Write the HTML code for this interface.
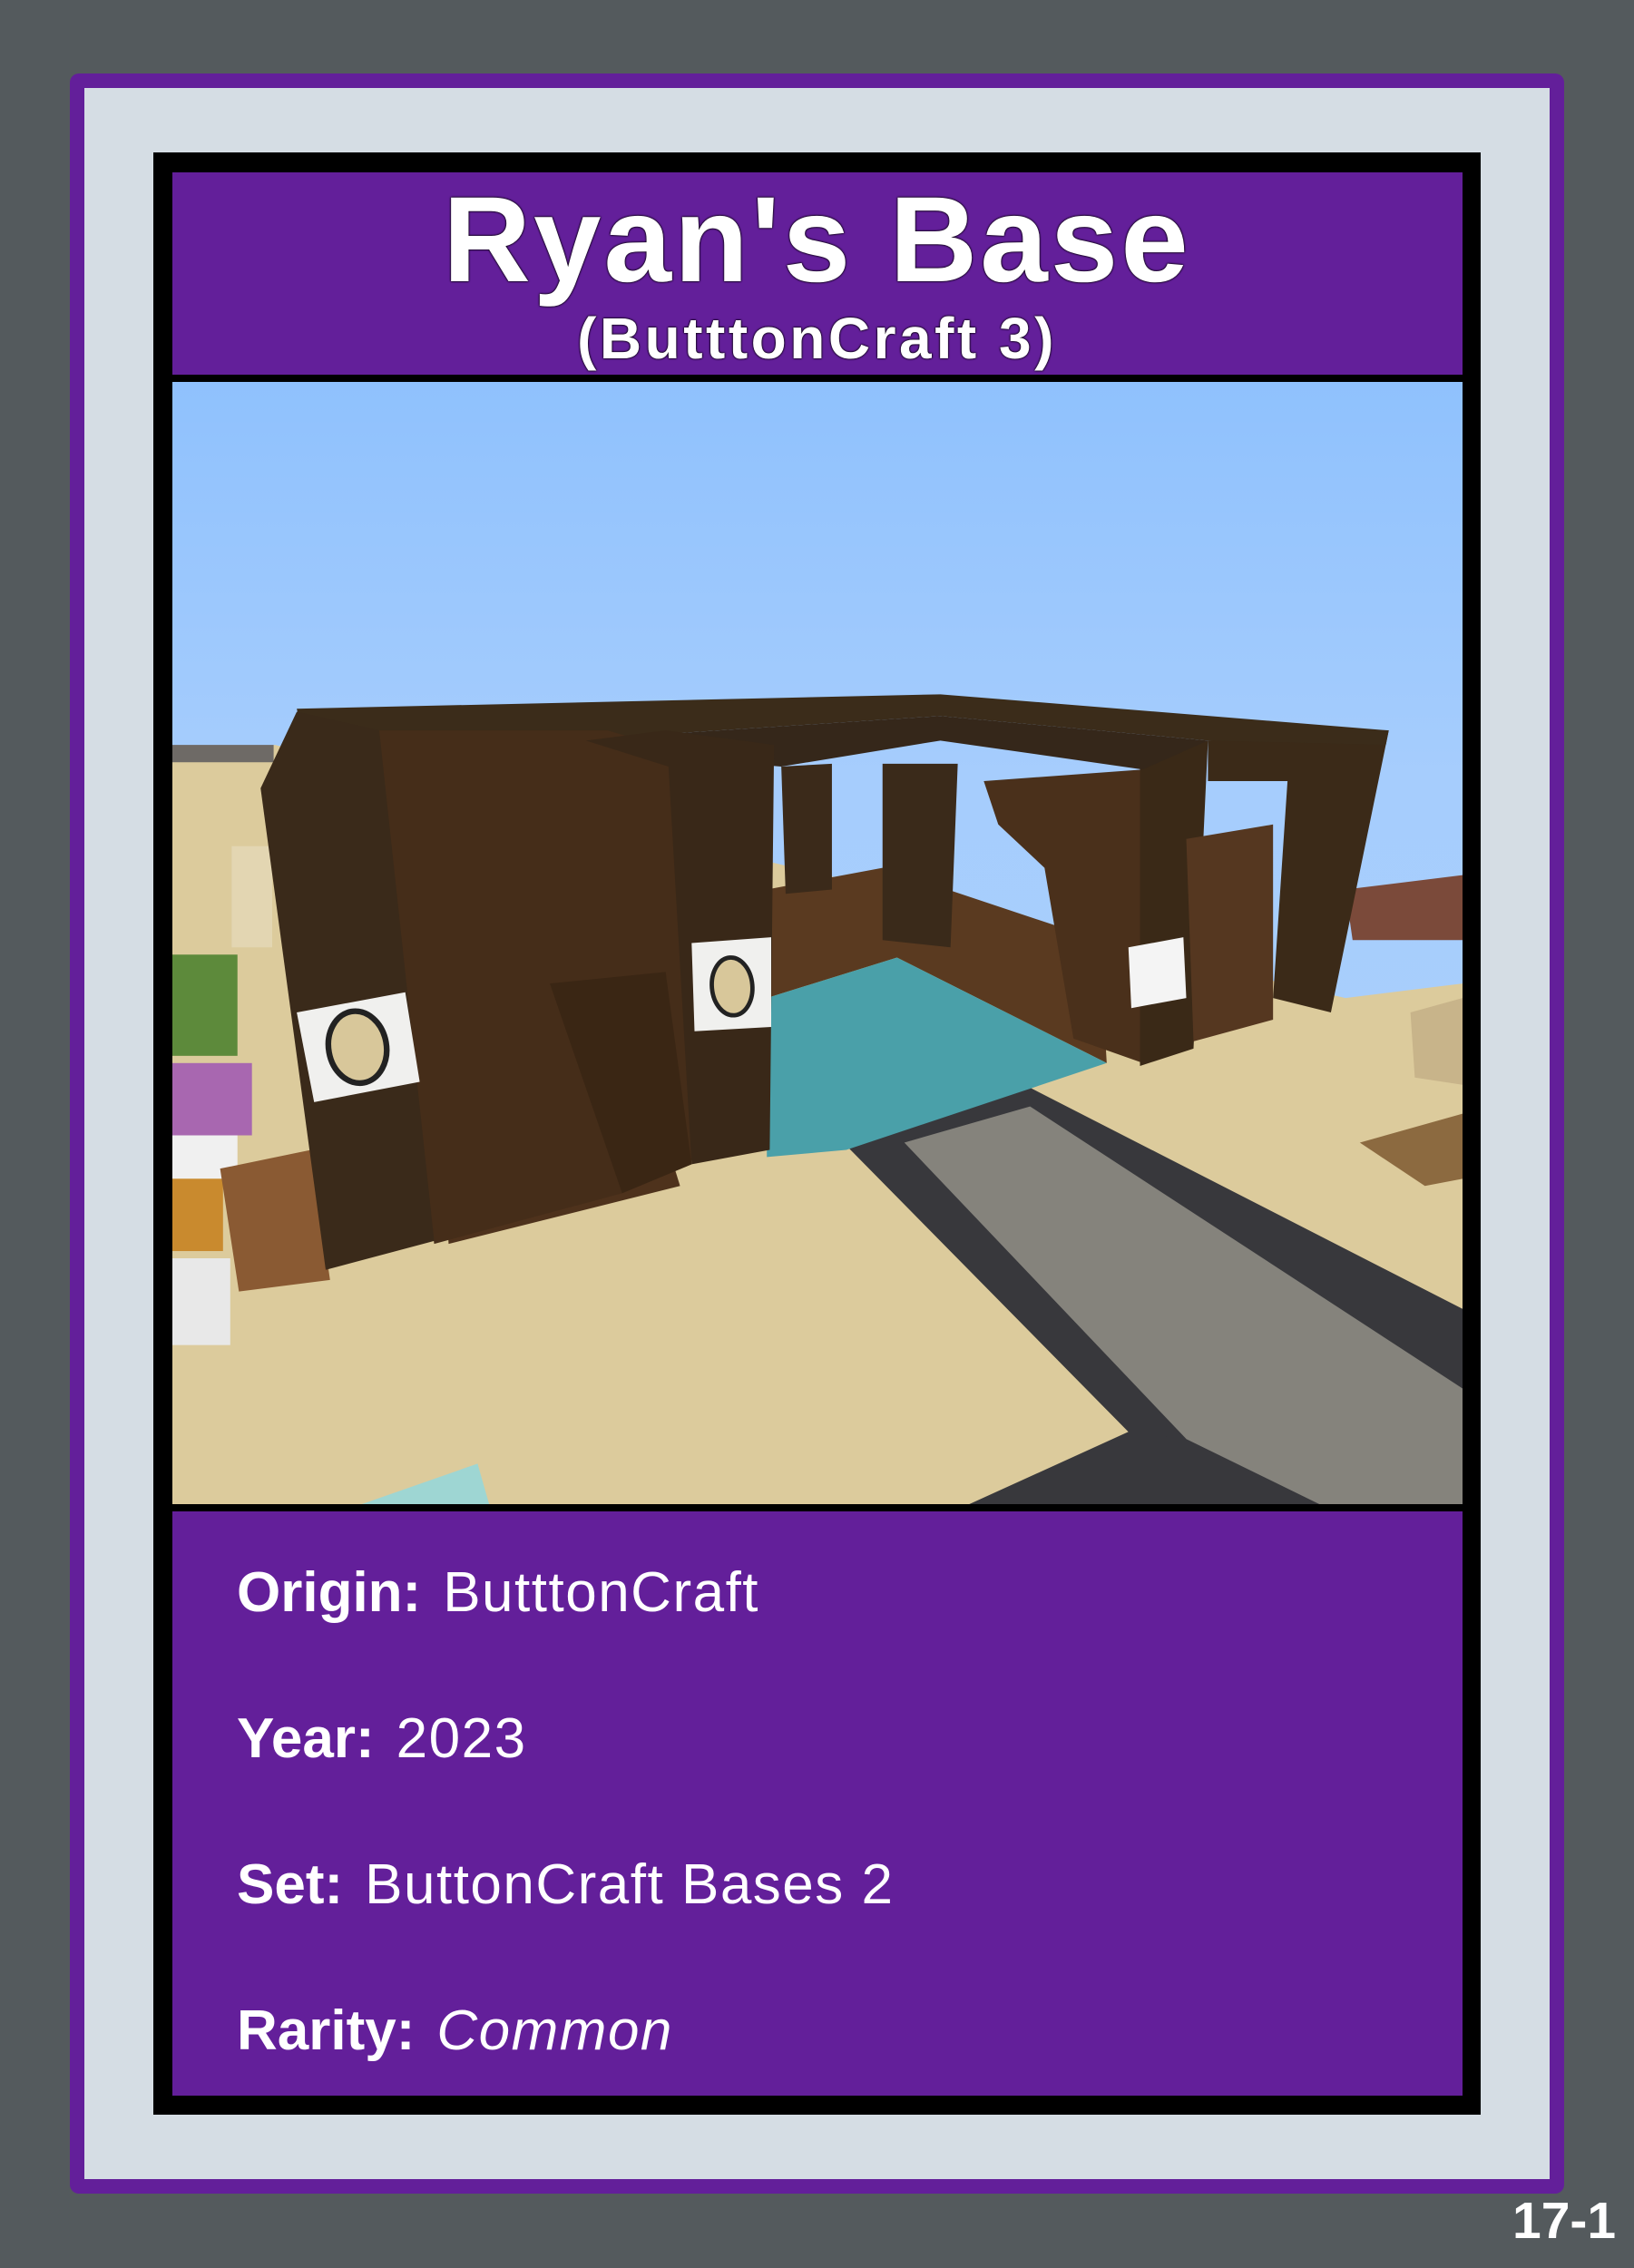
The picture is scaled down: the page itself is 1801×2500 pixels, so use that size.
<!DOCTYPE html>
<html><head><meta charset="utf-8"><style>
html,body{margin:0;padding:0}
body{width:1801px;height:2500px;background:#545a5d;position:relative;overflow:hidden;font-family:"Liberation Sans",sans-serif}
.frame{position:absolute;left:77px;top:81px;width:1615px;height:2305px;border:16px solid #631f9a;background:#d5dde4;border-radius:10px}
.black{position:absolute;left:169px;top:168px;width:1463px;height:2163px;background:#000}
.hdr{position:absolute;left:190px;top:190px;width:1422px;height:223px;background:#631f9a}
.img{position:absolute;left:190px;top:421px;width:1422px;height:1237px}
.body{position:absolute;left:190px;top:1666px;width:1422px;height:644px;background:#631f9a}
.t{position:absolute;left:0;width:1801px;text-align:center;color:#fff;font-weight:bold;white-space:nowrap;text-shadow:0 0 2px #000,0 0 2px #000}
.row{position:absolute;left:261px;color:#fff;font-size:62px;white-space:nowrap;line-height:1}
.row b{font-weight:bold;margin-right:24px}
.row span{letter-spacing:1.5px}
.num{position:absolute;left:1667px;top:2420px;color:#fff;font-weight:bold;font-size:57px;line-height:1}
</style></head><body>
<div class="frame"></div>
<div class="black"></div>
<div class="hdr"></div>
<div class="t" style="top:195px;font-size:134px;letter-spacing:3px;line-height:1.05">Ryan's Base</div>
<div class="t" style="top:341px;font-size:64px;letter-spacing:3.5px;line-height:1">(ButttonCraft 3)</div>
<svg class="img" viewBox="119 264 892 776" preserveAspectRatio="none">
<defs><linearGradient id="sky" x1="0" y1="0" x2="0" y2="1"><stop offset="0" stop-color="#8fc1fd"/><stop offset="0.35" stop-color="#a6cdfd"/><stop offset="1" stop-color="#abd0fb"/></linearGradient></defs>
<rect x="119" y="264" width="892" height="776" fill="url(#sky)"/>
<!-- sand -->
<polygon points="119,520 190,515 930,690 1011,680 1011,1040 119,1040" fill="#dccb9c"/>
<!-- distant left stuff -->
<rect x="119" y="515" width="70" height="12" fill="#6e6a66"/>
<rect x="160" y="585" width="28" height="70" fill="#e3d6b2"/>
<rect x="119" y="660" width="45" height="70" fill="#5d8a3b"/>
<rect x="119" y="735" width="55" height="50" fill="#a867b0"/>
<rect x="119" y="785" width="45" height="30" fill="#f0f0f0"/>
<rect x="119" y="815" width="35" height="50" fill="#c98a2e"/>
<polygon points="152,808 215,795 228,885 165,893" fill="#8a5a33"/>
<rect x="119" y="870" width="40" height="60" fill="#e8e8e8"/>
<!-- far right island -->
<polygon points="930,615 1011,605 1011,650 935,650" fill="#7b4a3a"/>
<polygon points="940,790 1011,770 1011,815 985,820" fill="#8c6a40"/>
<polygon points="975,700 1011,690 1011,750 978,745" fill="#c8b48a"/>
<!-- road -->
<polygon points="583,790 712,752 1011,905 1011,1040 670,1040 780,990" fill="#38383c"/>
<polygon points="625,790 712,765 1011,960 1011,1040 912,1040 820,995" fill="#85837c"/>
<polygon points="583,790 625,790 820,995 780,990" fill="#38383c"/>
<!-- interior floor -->
<polygon points="530,615 610,600 760,650 765,735 620,662 530,690" fill="#5a3a20"/>
<polygon points="300,700 430,690 470,820 310,860" fill="#4e321c"/>
<!-- water -->
<polygon points="530,690 620,662 765,735 585,795 530,800" fill="#4aa0a9"/>
<!-- back pillars -->
<polygon points="540,530 575,528 575,615 543,618" fill="#3b2a1a"/>
<polygon points="610,528 662,528 657,655 610,650" fill="#3a2a1a"/>
<!-- right structure -->
<polygon points="680,540 790,532 790,735 742,718 722,600 690,570" fill="#4a301b"/>
<polygon points="788,520 835,512 825,725 788,737" fill="#3a2917"/>
<polygon points="835,512 960,505 920,700 880,690 890,540 835,540" fill="#3b2a18"/>
<polygon points="820,580 880,570 880,705 825,720" fill="#553720"/>
<!-- roof -->
<polygon points="205,490 650,480 960,505 958,515 835,512 650,495 420,510 210,512" fill="#3b2c1a"/>
<polygon points="420,510 650,495 835,512 790,532 650,512 540,530 480,525" fill="#35271a"/>
<!-- left structure -->
<polygon points="258,505 420,505 470,520 478,805 430,825 300,860" fill="#452d19"/>
<polygon points="380,680 460,672 478,805 430,825" fill="#3a2614"/>
<polygon points="180,545 205,492 262,505 300,858 225,878" fill="#3a2a1a"/>
<polygon points="405,512 460,505 535,515 532,795 478,805 462,530" fill="#392818"/>
<!-- paintings -->
<polygon points="205,700 280,686 290,748 217,762" fill="#f0f0ee"/>
<ellipse cx="247" cy="724" rx="20" ry="25" transform="rotate(-10 247 724)" fill="#d8c79a" stroke="#222" stroke-width="4"/>
<polygon points="478,652 533,648 533,710 480,713" fill="#f0f0ee"/>
<ellipse cx="506" cy="682" rx="14" ry="20" transform="rotate(-5 506 682)" fill="#d8c79a" stroke="#222" stroke-width="3"/>
<polygon points="780,655 818,648 820,690 782,697" fill="#f4f4f4"/>
<!-- glass -->
<polygon points="250,1040 330,1012 338,1040" fill="#9ed6d3"/>
</svg>
<div class="body"></div>
<div class="row" style="top:1725px"><b>Origin:</b><span>ButttonCraft</span></div>
<div class="row" style="top:1886px"><b>Year:</b><span>2023</span></div>
<div class="row" style="top:2047px"><b>Set:</b><span>ButtonCraft Bases 2</span></div>
<div class="row" style="top:2208px"><b>Rarity:</b><span style="font-style:italic">Common</span></div>
<div class="num">17-1</div>
</body></html>
